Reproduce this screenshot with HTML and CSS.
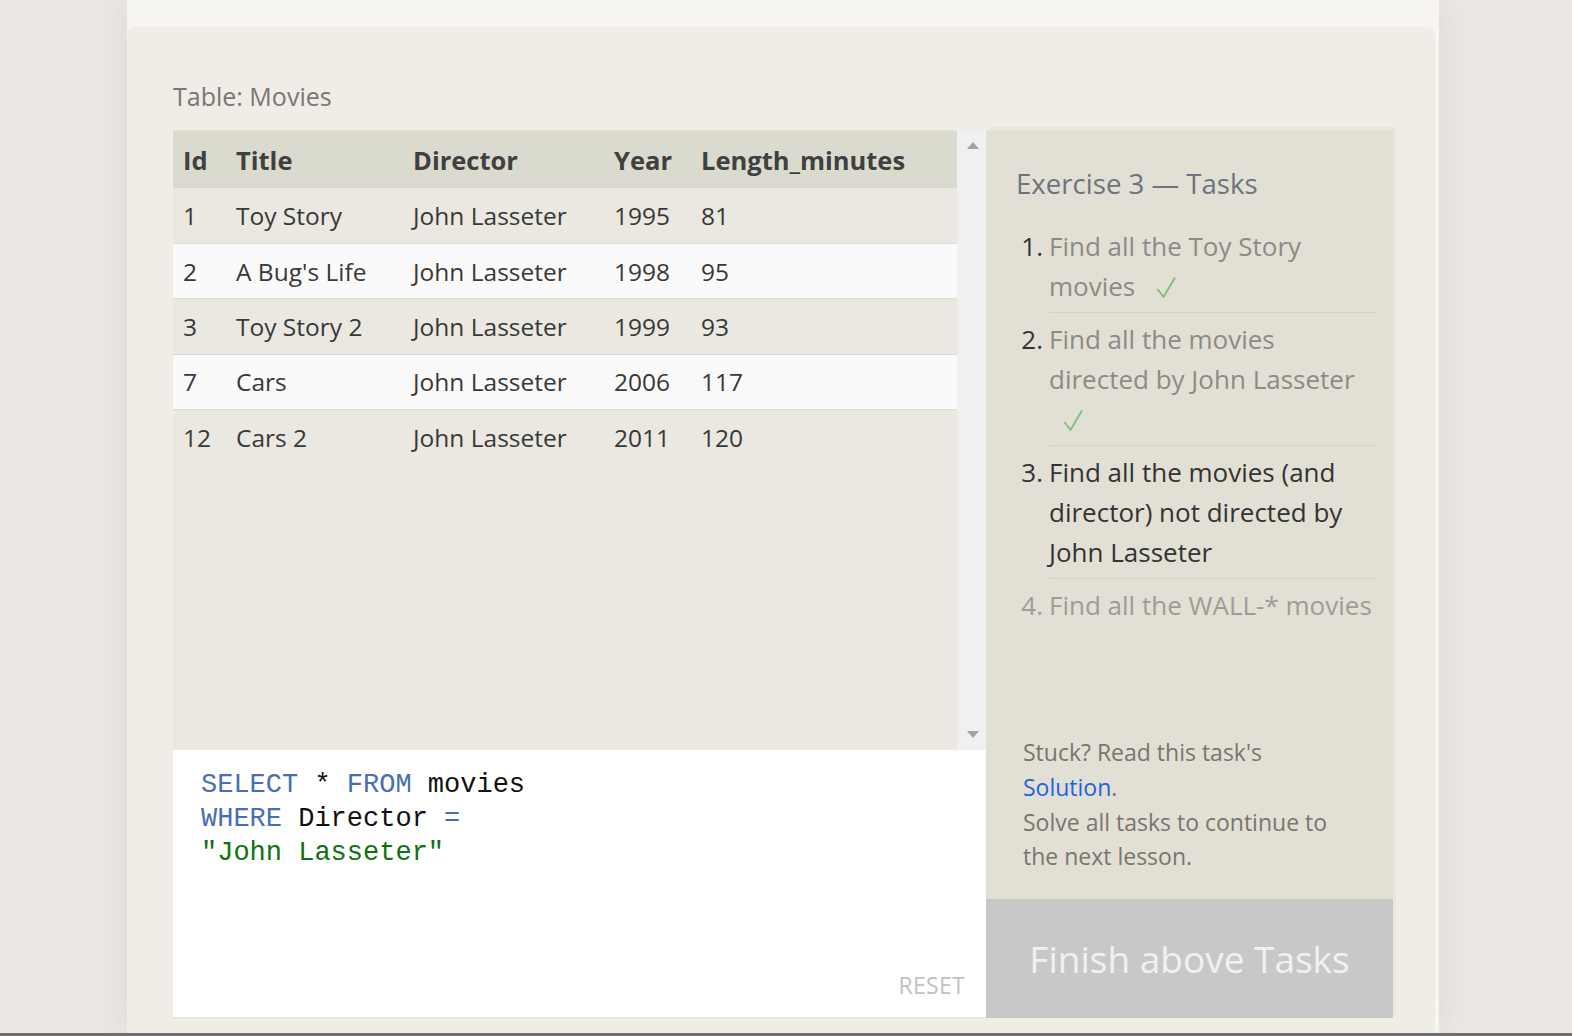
FILE: index.html
```html
<!DOCTYPE html>
<html lang="en">
<head>
<meta charset="utf-8">
<title>SQL Exercise 3 — Movies</title>
<link rel="stylesheet" href="styles.css">
</head>
<body>
<div class="page">
  <div class="shell">
    <div class="topstrip"></div>
    <div class="card">
      <div class="table-label">Table: Movies</div>
      <div class="workspace">
        <div class="left-col">
          <div class="results">
            <div class="results-scroll">
              <table class="movies">
                <thead>
                  <tr><th class="c-id">Id</th><th class="c-title">Title</th><th class="c-dir">Director</th><th class="c-year">Year</th><th class="c-len">Length_minutes</th></tr>
                </thead>
                <tbody>
                  <tr><td>1</td><td>Toy Story</td><td>John Lasseter</td><td>1995</td><td>81</td></tr>
                  <tr><td>2</td><td>A Bug's Life</td><td>John Lasseter</td><td>1998</td><td>95</td></tr>
                  <tr><td>3</td><td>Toy Story 2</td><td>John Lasseter</td><td>1999</td><td>93</td></tr>
                  <tr><td>7</td><td>Cars</td><td>John Lasseter</td><td>2006</td><td>117</td></tr>
                  <tr><td>12</td><td>Cars 2</td><td>John Lasseter</td><td>2011</td><td>120</td></tr>
                </tbody>
              </table>
            </div>
            <div class="scrollbar">
              <span class="arrow arrow-up"></span>
              <span class="arrow arrow-down"></span>
            </div>
          </div>
          <div class="editor">
            <pre class="code"><span class="kw">SELECT</span> * <span class="kw">FROM</span> movies
<span class="kw">WHERE</span> Director <span class="kw">=</span>
<span class="str">"John Lasseter"</span></pre>
            <div class="editor-foot"><span class="reset">RESET</span></div>
          </div>
        </div>
        <div class="tasks-panel">
          <h2 class="tasks-title">Exercise 3 — Tasks</h2>
          <ol class="tasks">
            <li class="task done"><span class="num">1.</span><span class="txt">Find all the Toy Story movies <span class="check"><svg width="20" height="22" viewBox="0 0 20 22"><path d="M1.5 13 L7.5 21 L19 1.5" fill="none" stroke="#78c07c" stroke-width="1.8" stroke-linejoin="round"/></svg></span></span></li>
            <li class="task done"><span class="num">2.</span><span class="txt">Find all the movies directed by John Lasseter <span class="check"><svg width="20" height="22" viewBox="0 0 20 22"><path d="M1.5 13 L7.5 21 L19 1.5" fill="none" stroke="#78c07c" stroke-width="1.8" stroke-linejoin="round"/></svg></span></span></li>
            <li class="task current"><span class="num">3.</span><span class="txt">Find all the movies (and director) not directed by John Lasseter</span></li>
            <li class="task todo"><span class="num">4.</span><span class="txt">Find all the WALL-* movies</span></li>
          </ol>
          <div class="stuck">
            <p>Stuck? Read this task's <a href="#" class="solution">Solution</a>.</p>
            <p>Solve all tasks to continue to the next lesson.</p>
          </div>
          <div class="finish">Finish above Tasks</div>
        </div>
      </div>
    </div>
  </div>
</div>
<div class="bottom-bar"></div>
</body>
</html>
```

FILE: styles.css
```css
* { box-sizing: border-box; }

html, body {
  margin: 0;
  padding: 0;
}

body {
  background: #ece8e5;
  font-family: "Open Sans", "Noto Sans", sans-serif;
  color: #333;
  height: 1036px;
  overflow: hidden;
  display: flex;
  flex-direction: column;
}

.page {
  flex: 1;
  display: flex;
  padding-left: 127px;
  min-height: 0;
}

.shell {
  width: 1312px;
  background: #f6f5f1;
  display: flex;
  flex-direction: column;
  box-shadow: 0 0 38px rgba(90, 70, 60, 0.10);
}

.topstrip {
  height: 27px;
  flex: none;
}

.card {
  flex: 1;
  background: #f0ede6;
  border-radius: 8px 8px 0 0;
  margin-right: 4px;
  padding: 52px 0 0 46px;
  display: flex;
  flex-direction: column;
}

.table-label {
  font-size: 25px;
  line-height: 34px;
  color: #777;
  margin-bottom: 17px;
}

.workspace {
  display: flex;
  align-items: stretch;
  height: 888px;
}

.left-col {
  width: 813px;
  display: flex;
  flex-direction: column;
}

.results {
  height: 620px;
  display: flex;
  background: #eae8e0;
}

.results-scroll {
  flex: 1;
  border-top: 1px solid #e2e0d8;
}

.movies {
  width: 784px;
  border-collapse: collapse;
  table-layout: fixed;
  font-size: 24.5px;
  color: #383838;
}

.movies th {
  height: 57px;
  background: #dbdace;
  text-align: left;
  font-weight: 700;
  font-size: 25.5px;
  color: #404040;
  padding: 0 10px;
}

.c-id { width: 53px; }
.c-title { width: 177px; }
.c-dir { width: 201px; }
.c-year { width: 87px; }

.movies td {
  height: 55.4px;
  padding: 0 10px;
  border-bottom: 1px solid #dddcd4;
  white-space: nowrap;
}

.movies tbody tr:nth-child(odd) td { background: #eae8e0; }
.movies tbody tr:nth-child(even) td { background: #fafafa; }
.movies tbody tr:last-child td { border-bottom: none; }

.scrollbar {
  width: 29px;
  background: #f0f0f0;
  display: flex;
  flex-direction: column;
  justify-content: space-between;
  align-items: center;
  padding: 12px 0 12px 0;
}

.arrow {
  width: 0;
  height: 0;
  border-left: 6.5px solid transparent;
  border-right: 6.5px solid transparent;
  margin-left: 2px;
}

.arrow-up { border-bottom: 7px solid #a3a3a3; }
.arrow-down { border-top: 7px solid #a3a3a3; }

.editor {
  flex: 1;
  background: #fff;
  display: flex;
  flex-direction: column;
  border-bottom: 1px solid #e4e2da;
}

.code {
  flex: 1;
  margin: 0;
  padding: 18px 28px 0 28px;
  font-family: "Liberation Mono", "DejaVu Sans Mono", monospace;
  font-size: 27px;
  line-height: 34px;
  color: #111;
}

.kw { color: #4a6db5; }
.str { color: #0f720f; }

.editor-foot {
  display: flex;
  justify-content: flex-end;
  padding: 0 21px 20px 0;
}

.reset {
  font-size: 23px;
  line-height: 24px;
  color: #c2c2c2;
  letter-spacing: 0.3px;
}

.tasks-panel {
  width: 407px;
  background: #e2dfd4;
  display: flex;
  flex-direction: column;
  box-shadow: 3px -3px 0 #e9e6dd;
}

.tasks-title {
  margin: 0;
  padding: 35px 0 0 30px;
  font-size: 27.6px;
  line-height: 36px;
  font-weight: 400;
  color: #6d7380;
}

.tasks {
  list-style: none;
  margin: 19px 17px 0 30px;
  padding: 0;
}

.task {
  display: flex;
  font-size: 26px;
  line-height: 40px;
}

.num {
  width: 27px;
  flex: none;
  text-align: right;
  padding-top: 6px;
  margin-right: 6px;
  color: #333;
}

.txt {
  flex: 1;
  padding: 6px 6px 6px 0;
  border-bottom: 1px solid #d4d1c6;
}

.task:last-child .txt { border-bottom: none; white-space: nowrap; padding-right: 0; }

.done .txt { color: #8d8b86; }
.current .txt { color: #333; }
.todo .num, .todo .txt { color: #9e9c97; }

.check {
  display: inline-block;
  margin-left: 14px;
  vertical-align: -2px;
}

.check svg { display: block; }

.stuck {
  margin-top: auto;
  padding: 0 31px 0 37px;
  font-size: 23px;
  line-height: 34.7px;
  color: #7a756f;
  margin-bottom: 25px;
}

.stuck p { margin: 0; }

.solution {
  color: #1d63e4;
  text-decoration: none;
}

.finish {
  height: 119px;
  flex: none;
  background: #c8c8c8;
  color: #f1f1f1;
  font-size: 37px;
  display: flex;
  align-items: center;
  justify-content: center;
}

.bottom-bar {
  height: 3px;
  flex: none;
  background: #6e6e6e;
}
```
